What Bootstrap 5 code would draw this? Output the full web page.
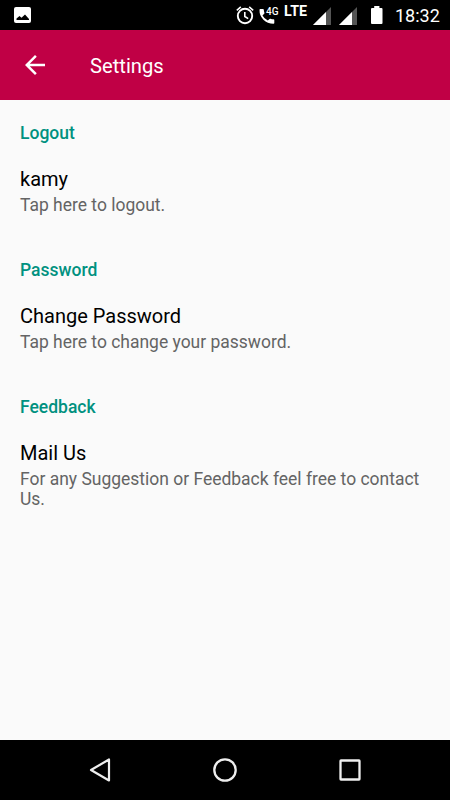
<!DOCTYPE html>
<html lang="en">
<head>
<meta charset="utf-8">
<meta name="viewport" content="width=device-width, initial-scale=1">
<title>Settings</title>
<link href="https://cdn.jsdelivr.net/npm/bootstrap@5.3.0/dist/css/bootstrap.min.css" rel="stylesheet">
<style>
  body { font-family: Roboto, "Liberation Sans", sans-serif; background: #fafafa; }
  svg { display: block; flex: none; }
  .status-bar { height: 30px; padding: 0 10px 0 13px; }
  .clock { font-size: 18px; line-height: 30px; padding-top: 1px; margin-left: 11px; width: 45px; white-space: nowrap; }
  .app-bar { height: 70px; background: #c00045; padding: 0 20px; }
  .app-title { font-size: 20.2px; line-height: 24px; margin-left: 40px; padding-top: 1px; }
  .pref-group { height: 137px; padding: 23px 20px 0; }
  .pref-head { font-size: 17.5px; line-height: 20px; font-weight: 500; color: #009180; margin-bottom: 24px; }
  .pref-title { font-size: 20px; line-height: 24px; color: #000; margin-bottom: 4px; }
  .pref-text { font-size: 17.48px; line-height: 20px; color: #646464; }
  .nav-keys { height: 60px; padding: 0 37px; }
  .nav-keys button { width: 126px; }
</style>
<script src="https://cdn.jsdelivr.net/npm/bootstrap@5.3.0/dist/js/bootstrap.bundle.min.js"></script>
</head>
<body class="vh-100 d-flex flex-column overflow-hidden">
  <div class="status-bar bg-black text-white d-flex align-items-center flex-shrink-0">
    <svg width="20" height="30" viewBox="0 0 20 30"><rect x="1" y="7" width="17" height="16" rx="2" fill="#fff"/><path d="M3.5 20v-1.5L6.5 16l2 1.8L12 14.5l4 4.5v1z" fill="#000"/></svg>
    <svg class="ms-auto" width="93" height="30" viewBox="235 0 93 30" fill="#fff">
      <circle cx="245" cy="16" r="7.2" fill="none" stroke="#fff" stroke-width="1.9"/>
      <path d="M236.8 10.3l4-3.4M253.200 10.3l-4-3.4M244.8 12v4.5l3.4 2.1" fill="none" stroke="#fff" stroke-width="1.6"/>
      <path d="M260.3 9h2.7q.7 0 .8.8.1 1.5.6 3 .2.6-.2 1l-1.7 1.7q1.9 3.400 5.3 5.100l1.700-1.700q.4-.4 1-.2 1.500.5 3 .6.8.1.8.8v2.900q0 .8-.8.8-6 0-10.100-4.100T259.500 9.800q0-.8.8-.8z"/>
      <text x="266" y="15" font-size="11.4" font-weight="500" textLength="12.5" lengthAdjust="spacingAndGlyphs">4G</text>
      <text x="284" y="16" font-size="13.8" font-weight="700" textLength="23" lengthAdjust="spacingAndGlyphs">LTE</text>
      <path d="M331 7v18h-18z" fill="#555"/><path d="M326 12v13h-13z"/>
    </svg>
    <svg width="56" height="30" viewBox="328 0 56 30" fill="#fff">
      <path d="M331 7v18h-3V10z" fill="#555"/>
      <path d="M357 7v18h-18z" fill="#555"/><path d="M352 12v13h-13z"/>
      <path d="M372 8h2.200V6h5.200v2h2.100q1 0 1 1v14q0 1-1 1H372q-1 0-1-1V9q0-1 1-1z"/>
    </svg>
    <div class="clock">18:32</div>
  </div>

  <header class="app-bar text-white d-flex align-items-center flex-shrink-0">
    <svg width="30" height="30" viewBox="0 0 24 24" fill="#fff"><path d="M20 11H7.830l5.590-5.590L12 4l-8 8 8 8 1.410-1.410L7.830 13H20v-2z"/></svg>
    <h1 class="app-title mb-0 fw-normal">Settings</h1>
  </header>

  <main class="flex-grow-1">
    <section class="pref-group">
      <h2 class="pref-head">Logout</h2>
      <div class="pref-title">kamy</div>
      <div class="pref-text">Tap here to logout.</div>
    </section>
    <section class="pref-group">
      <h2 class="pref-head">Password</h2>
      <div class="pref-title">Change Password</div>
      <div class="pref-text">Tap here to change your password.</div>
    </section>
    <section class="pref-group">
      <h2 class="pref-head">Feedback</h2>
      <div class="pref-title">Mail Us</div>
      <div class="pref-text">For any Suggestion or Feedback feel free to contact Us.</div>
    </section>
  </main>

  <nav class="nav-keys bg-black d-flex align-items-center justify-content-between flex-shrink-0" aria-label="System">
    <button class="border-0 bg-transparent p-0 d-flex justify-content-center" aria-label="Back">
      <svg width="28" height="28" viewBox="0 0 28 28" fill="none" stroke="#eee" stroke-width="2.2" stroke-linejoin="round"><path d="M23 3.5v21L5 14z"/></svg>
    </button>
    <button class="border-0 bg-transparent p-0 d-flex justify-content-center" aria-label="Home">
      <svg width="28" height="28" viewBox="0 0 28 28" fill="none" stroke="#eee" stroke-width="2.3"><circle cx="14" cy="14" r="10.7"/></svg>
    </button>
    <button class="border-0 bg-transparent p-0 d-flex justify-content-center" aria-label="Recent apps">
      <svg width="28" height="28" viewBox="0 0 28 28" fill="none" stroke="#eee" stroke-width="2.3" stroke-linejoin="round"><rect x="4.5" y="4.5" width="19" height="19" rx=".5"/></svg>
    </button>
  </nav>
</body>
</html>
